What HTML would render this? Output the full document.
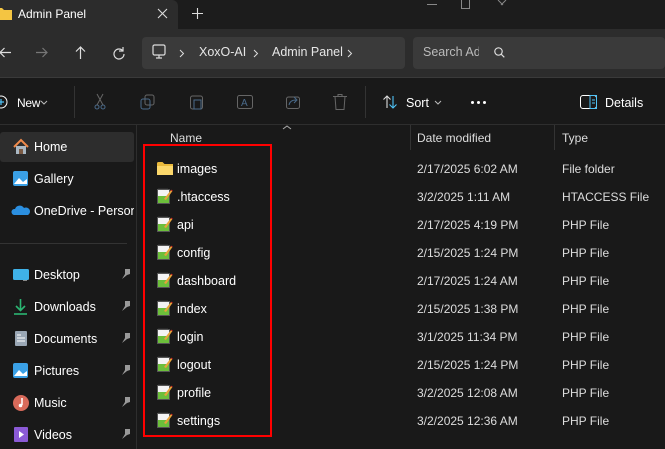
<!DOCTYPE html>
<html><head><meta charset="utf-8"><style>
*{margin:0;padding:0;box-sizing:border-box}
body{width:665px;height:449px;overflow:hidden;background:#191919;font-family:"Liberation Sans",sans-serif;color:#fff;font-size:12px;position:relative}
.a{position:absolute}
.t{position:absolute;white-space:nowrap}
svg{position:absolute;overflow:visible}
.g{color:#e6e6e6}
</style></head><body>
<div class="a" style="left:0;top:0;width:665px;height:29px;background:#1c1c1c"></div>
<div class="a" style="left:0;top:0;width:178px;height:29px;background:#2c2c2c;border-radius:0 6px 0 0"></div>
<svg style="left:-4px;top:7px" width="16" height="13"><path d="M0 1h6l2 2h8v10H0z" fill="#f4c542"/></svg>
<div class="t" style="left:18px;top:7px;font-size:12px">Admin Panel</div>
<svg style="left:158px;top:9px" width="9" height="9"><path d="M0 0l9 9M9 0L0 9" stroke="#ddd" stroke-width="1.1"/></svg>
<svg style="left:192px;top:8px" width="11" height="11"><path d="M5.5 0v11M0 5.5h11" stroke="#ddd" stroke-width="1.1"/></svg>
<div class="a" style="left:427px;top:4px;width:10px;height:1px;background:#888"></div>
<div class="a" style="left:461px;top:0;width:9px;height:9px;border:1px solid #888;border-top:none"></div>
<svg style="left:498px;top:0" width="8" height="5"><path d="M0 0l5 5M8 0L3 5" stroke="#888"/></svg>
<div class="a" style="left:0;top:29px;width:665px;height:48px;background:#2c2c2c"></div>
<div class="a" style="left:0;top:77px;width:665px;height:1px;background:#3a3a3a"></div>
<svg style="left:-1px;top:47px" width="12" height="11"><path d="M12 5.5H1M5.5 1L1 5.5 5.5 10" stroke="#ddd" fill="none" stroke-width="1.2"/></svg>
<svg style="left:36px;top:47px" width="12" height="11"><path d="M0 5.5h11M6.5 1L11 5.5 6.5 10" stroke="#777" fill="none" stroke-width="1.2"/></svg>
<svg style="left:75px;top:46px" width="11" height="13"><path d="M5.5 13V1M1 5.5L5.5 1 10 5.5" stroke="#ddd" fill="none" stroke-width="1.2"/></svg>
<svg style="left:113px;top:47px" width="12" height="12"><path d="M10 4A5 5 0 1 0 11 7" stroke="#ddd" fill="none" stroke-width="1.2"/><path d="M10 0v4h-4" stroke="#ddd" fill="none" stroke-width="1.2"/></svg>
<div class="a" style="left:142px;top:37px;width:263px;height:32px;background:#3a3a3a;border-radius:4px"></div>
<svg style="left:152px;top:44px" width="14" height="16"><rect x="1" y="1" width="12" height="10" rx="1.5" stroke="#ddd" fill="none" stroke-width="1.2"/><path d="M4 14h6M7 11v3" stroke="#ddd" stroke-width="1.2"/></svg>
<svg style="left:180px;top:50px" width="4" height="7"><path d="M0 0l3.5 3.5L0 7" stroke="#ddd" fill="none"/></svg>
<div class="t g" style="left:199px;top:45px;font-size:12.5px">XoxO-AI</div>
<svg style="left:254px;top:50px" width="4" height="7"><path d="M0 0l3.5 3.5L0 7" stroke="#ddd" fill="none"/></svg>
<div class="t g" style="left:272px;top:45px;font-size:12.5px">Admin Panel</div>
<svg style="left:348px;top:50px" width="4" height="7"><path d="M0 0l3.5 3.5L0 7" stroke="#ddd" fill="none"/></svg>
<div class="a" style="left:413px;top:37px;width:252px;height:32px;background:#3a3a3a;border-radius:4px"></div>
<div class="t" style="left:423px;top:45px;font-size:12.5px;color:#bbb;width:56px;overflow:hidden">Search Admin Panel</div>
<svg style="left:494px;top:47px" width="11" height="11"><circle cx="4.5" cy="4.5" r="3.7" stroke="#ddd" fill="none" stroke-width="1.2"/><path d="M7.3 7.3l3 3" stroke="#ddd" stroke-width="1.2"/></svg>
<svg style="left:-6px;top:95px" width="14" height="14"><circle cx="7" cy="7" r="6" stroke="#fff" fill="none"/><path d="M7 4v6M4 7h6" stroke="#4fc3f7" stroke-width="1.2"/></svg>
<div class="t" style="left:17px;top:96px;font-size:12px;letter-spacing:-0.3px">New</div>
<svg style="left:41px;top:101px" width="6" height="4"><path d="M0 0l3 3 3-3" stroke="#bbb" fill="none"/></svg>
<div class="a" style="left:74px;top:86px;width:1px;height:32px;background:#333"></div>
<svg style="left:94px;top:94px" width="12" height="16"><circle cx="3" cy="13" r="2" stroke="#4a6a8a" fill="none"/><circle cx="9" cy="13" r="2" stroke="#4a6a8a" fill="none"/><path d="M3 11L9 0M9 11L3 0" stroke="#666"/></svg>
<svg style="left:141px;top:95px" width="14" height="14"><rect x="4" y="0" width="9" height="10" rx="2" stroke="#666" fill="none"/><rect x="0" y="4" width="9" height="10" rx="2" stroke="#4a6a8a" fill="none"/></svg>
<svg style="left:190px;top:94px" width="13" height="16"><rect x="0.5" y="2" width="12" height="13" rx="2" stroke="#666" fill="none"/><rect x="4" y="6" width="7" height="9" stroke="#4a6a8a" fill="none"/></svg>
<svg style="left:237px;top:95px" width="16" height="14"><rect x="0.5" y="0.5" width="15" height="13" rx="2" stroke="#666" fill="none"/><text x="4" y="11" font-size="10" fill="#4a6a8a" font-family="Liberation Sans">A</text></svg>
<svg style="left:286px;top:95px" width="14" height="14"><rect x="0.5" y="2" width="13" height="11.5" rx="2" stroke="#666" fill="none"/><path d="M3 10Q4 5 10 5M8 2l3 3-3 3" stroke="#4a6a8a" fill="none"/></svg>
<svg style="left:333px;top:94px" width="14" height="16"><path d="M0 2.5h14M5 2.5V0.5h4v2M2 2.5l1 13h8l1-13" stroke="#666" fill="none"/></svg>
<div class="a" style="left:365px;top:86px;width:1px;height:32px;background:#333"></div>
<svg style="left:383px;top:95px" width="14" height="14"><path d="M4 13V1M0.5 4.5L4 1l3.5 3.5" stroke="#ddd" fill="none" stroke-width="1.1"/><path d="M10 1v12M6.5 9.5L10 13l3.5-3.5" stroke="#4fc3f7" fill="none" stroke-width="1.1"/></svg>
<div class="t" style="left:406px;top:96px;font-size:12.5px">Sort</div>
<svg style="left:435px;top:101px" width="6" height="4"><path d="M0 0l3 3 3-3" stroke="#bbb" fill="none"/></svg>
<svg style="left:471px;top:101px" width="16" height="3"><circle cx="1.5" cy="1.5" r="1.5" fill="#fff"/><circle cx="7.5" cy="1.5" r="1.5" fill="#fff"/><circle cx="13.5" cy="1.5" r="1.5" fill="#fff"/></svg>
<svg style="left:580px;top:95px" width="17" height="14"><rect x="0.5" y="0.5" width="16" height="13" rx="2.5" stroke="#fff" fill="none"/><rect x="10" y="0.5" width="6.5" height="13" fill="none" stroke="#4fc3f7"/><path d="M12 5h3M12 8h3" stroke="#4fc3f7"/></svg>
<div class="t" style="left:605px;top:96px;font-size:12.5px">Details</div>
<div class="a" style="left:0;top:124px;width:665px;height:1px;background:#2e2e2e"></div>
<div class="a" style="left:136px;top:124px;width:1px;height:325px;background:#2e2e2e"></div>
<div class="a" style="left:0;top:132px;width:134px;height:30px;background:#2d2d2d;border-radius:3px"></div>
<svg style="left:13px;top:139px" width="16" height="16"><path d="M1 8L8 1l7 7" stroke="#f08a4b" stroke-width="2" fill="none"/><path d="M3 7v8h10V7" fill="#a9b8c4"/><rect x="6" y="10" width="4" height="5" fill="#7a5a44"/></svg>
<div class="t" style="left:34px;top:140px;font-size:12.5px">Home</div>
<svg style="left:13px;top:171px" width="15" height="15"><rect width="15" height="15" rx="2" fill="#3aa0e6"/><path d="M1 13l5-6 4 4 4-3v5H1z" fill="#fff"/></svg>
<div class="t" style="left:34px;top:172px;font-size:12.5px">Gallery</div>
<svg style="left:12px;top:205px" width="18" height="10"><path d="M2 10a3 3 0 0 1 1-6 5 5 0 0 1 9-1 4 4 0 0 1 4 7z" fill="#2b8fe0"/></svg>
<div class="t" style="left:34px;top:204px;font-size:12.5px;width:100px;overflow:hidden">OneDrive - Personal</div>
<div class="a" style="left:0;top:243px;width:127px;height:1px;background:#333"></div>
<svg style="left:13px;top:269px" width="16" height="13"><rect width="16" height="11" rx="1.5" fill="#3fb2e8"/><rect x="10" y="11" width="4" height="1" fill="#888"/></svg>
<div class="t" style="left:34px;top:268px;font-size:12.5px">Desktop</div>
<svg style="left:14px;top:299px" width="13" height="16"><path d="M6.5 0v11M2 7l4.5 4.5L11 7" stroke="#2bb673" stroke-width="1.6" fill="none"/><path d="M0 15h13" stroke="#2bb673" stroke-width="1.6"/></svg>
<div class="t" style="left:34px;top:300px;font-size:12.5px">Downloads</div>
<svg style="left:15px;top:331px" width="12" height="15"><rect width="12" height="15" rx="1" fill="#9aa7b5"/><path d="M2 4h4M2 7h8M2 10h8" stroke="#fff"/></svg>
<div class="t" style="left:34px;top:332px;font-size:12.5px">Documents</div>
<svg style="left:13px;top:363px" width="15" height="15"><rect width="15" height="15" rx="2" fill="#3aa0e6"/><path d="M1 13l5-6 4 4 4-3v5H1z" fill="#fff"/></svg>
<div class="t" style="left:34px;top:364px;font-size:12.5px">Pictures</div>
<svg style="left:13px;top:395px" width="16" height="16"><circle cx="8" cy="8" r="8" fill="#d86a5a"/><path d="M9 3v7" stroke="#fff" stroke-width="1.5"/><circle cx="7.5" cy="10.5" r="1.8" fill="#fff"/></svg>
<div class="t" style="left:34px;top:396px;font-size:12.5px">Music</div>
<svg style="left:14px;top:427px" width="14" height="15"><rect width="14" height="15" rx="1" fill="#8b5ad6"/><path d="M5 4l5 3.5L5 11z" fill="#fff"/></svg>
<div class="t" style="left:34px;top:428px;font-size:12.5px">Videos</div>
<svg style="left:121px;top:269px" width="10" height="10"><path d="M4 0h5v5L6 6 1 10 4 5z" fill="#999"/></svg>
<svg style="left:121px;top:301px" width="10" height="10"><path d="M4 0h5v5L6 6 1 10 4 5z" fill="#999"/></svg>
<svg style="left:121px;top:333px" width="10" height="10"><path d="M4 0h5v5L6 6 1 10 4 5z" fill="#999"/></svg>
<svg style="left:121px;top:365px" width="10" height="10"><path d="M4 0h5v5L6 6 1 10 4 5z" fill="#999"/></svg>
<svg style="left:121px;top:397px" width="10" height="10"><path d="M4 0h5v5L6 6 1 10 4 5z" fill="#999"/></svg>
<svg style="left:121px;top:429px" width="10" height="10"><path d="M4 0h5v5L6 6 1 10 4 5z" fill="#999"/></svg>
<svg style="left:283px;top:125px" width="8" height="5"><path d="M0 4l4-3 4 3" stroke="#aaa" fill="none"/></svg>
<div class="t" style="left:170px;top:131px;font-size:12px;color:#ddd">Name</div>
<div class="a" style="left:410px;top:125px;width:1px;height:25px;background:#333"></div>
<div class="t" style="left:417px;top:131px;font-size:12px;color:#ddd">Date modified</div>
<div class="a" style="left:554px;top:125px;width:1px;height:25px;background:#333"></div>
<div class="t" style="left:562px;top:131px;font-size:12px;color:#ddd">Type</div>
<div class="a" style="left:143px;top:144px;width:129px;height:293px;border:2px solid #f00"></div>
<div id="rows"></div>
<script>
var r=[["images","2/17/2025 6:02 AM","File folder"],[".htaccess","3/2/2025 1:11 AM","HTACCESS File"],["api","2/17/2025 4:19 PM","PHP File"],["config","2/15/2025 1:24 PM","PHP File"],["dashboard","2/17/2025 1:24 AM","PHP File"],["index","2/15/2025 1:38 PM","PHP File"],["login","3/1/2025 11:34 PM","PHP File"],["logout","2/15/2025 1:24 PM","PHP File"],["profile","3/2/2025 12:08 AM","PHP File"],["settings","3/2/2025 12:36 AM","PHP File"]];
var h="";r.forEach(function(e,i){var y=162+i*28;
var ic=i==0?'<svg style="left:157px;top:'+(y+0)+'px" width="16" height="13"><path d="M0 1.5Q0 0 1.5 0h4l2 2H16v11H0z" fill="#e9b93c"/><path d="M0 4h16v9H0z" fill="#fbd76b"/></svg>'
:'<svg style="left:157px;top:'+(y-2)+'px" width="16" height="16"><rect x="0.5" y="1.5" width="12" height="14" fill="#f4f4f4" stroke="#555"/><path d="M2 1.5v-1M4 1.5v-1M6 1.5v-1M8 1.5v-1M10 1.5v-1" stroke="#555"/><path d="M1 8h11v7H1z" fill="#6cbf3b"/><path d="M7 11l7-9 1.5 1L9 12z" fill="#e8a33a"/><path d="M14 2l1.5 1" stroke="#c22"/></svg>';
h+=ic+'<div class="t" style="left:177px;top:'+y+'px;font-size:12.5px">'+e[0]+'</div><div class="t" style="left:417px;top:'+y+'px;font-size:12px;color:#ddd">'+e[1]+'</div><div class="t" style="left:562px;top:'+y+'px;font-size:12px;color:#ddd">'+e[2]+'</div>';});
document.getElementById("rows").innerHTML=h;
</script>
</body></html>
